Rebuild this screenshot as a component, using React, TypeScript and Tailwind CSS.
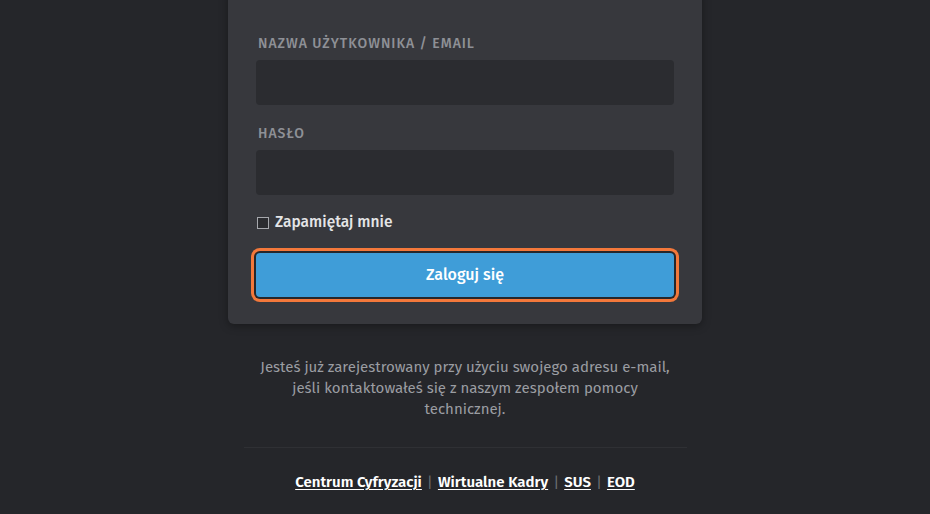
export default function App() {
  const font = { fontFamily: '"Fira Sans", "Open Sans", "Noto Sans", sans-serif' };
  return (
    <div className="min-h-screen bg-[#25262a] text-[#e4e5e7]" style={font}>
      <div className="mx-auto flex w-[474px] flex-col items-center">
        <div className="-mt-[8px] w-full rounded-b-md bg-[#37383d] px-[28px] pb-[27px] pt-[41px] shadow-[0_2px_8px_rgba(0,0,0,0.35)]">
          <label className="block pl-[2px] text-[14px] font-medium uppercase tracking-[0.07em] text-[#8e9096]">
            Nazwa użytkownika / email
          </label>
          <div className="mt-[6px] h-[45px] w-full rounded-[4px] bg-[#2b2c30]" />
          <label className="mt-[18px] block pl-[2px] text-[14px] font-medium uppercase tracking-[0.07em] text-[#8e9096]">
            Hasło
          </label>
          <div className="mt-[6px] h-[45px] w-full rounded-[4px] bg-[#2b2c30]" />
          <div className="mt-[16px] flex items-center gap-[6px] pl-[1px]">
            <span className="h-[12px] w-[12px] border border-[#a6a8ad] bg-[#2b2c30]" />
            <span className="text-[15.5px] font-medium text-[#e4e5e7]">Zapamiętaj mnie</span>
          </div>
          <button className="mt-[19px] flex h-[44px] w-full items-center justify-center rounded-[4px] bg-[#3f9dd8] text-[16px] font-medium text-white ring-[3px] ring-[#f3783b] ring-offset-2 ring-offset-[#26272b]">
            Zaloguj się
          </button>
        </div>
        <p className="mt-[33px] w-[430px] text-center text-[15px] leading-[21px] text-[#9b9da2]">
          Jesteś już zarejestrowany przy użyciu swojego adresu e-mail, jeśli kontaktowałeś się z naszym zespołem pomocy technicznej.
        </p>
        <div className="mt-[27px] h-px w-[443px] bg-[#2f3034]" />
        <div className="mt-[23px] flex items-center gap-[5px] text-[15px] font-semibold text-white">
          <a className="underline underline-offset-2">Centrum Cyfryzacji</a>
          <span className="font-normal text-[#6c6e73]">|</span>
          <a className="underline underline-offset-2">Wirtualne Kadry</a>
          <span className="font-normal text-[#6c6e73]">|</span>
          <a className="underline underline-offset-2">SUS</a>
          <span className="font-normal text-[#6c6e73]">|</span>
          <a className="underline underline-offset-2">EOD</a>
        </div>
      </div>
    </div>
  );
}
